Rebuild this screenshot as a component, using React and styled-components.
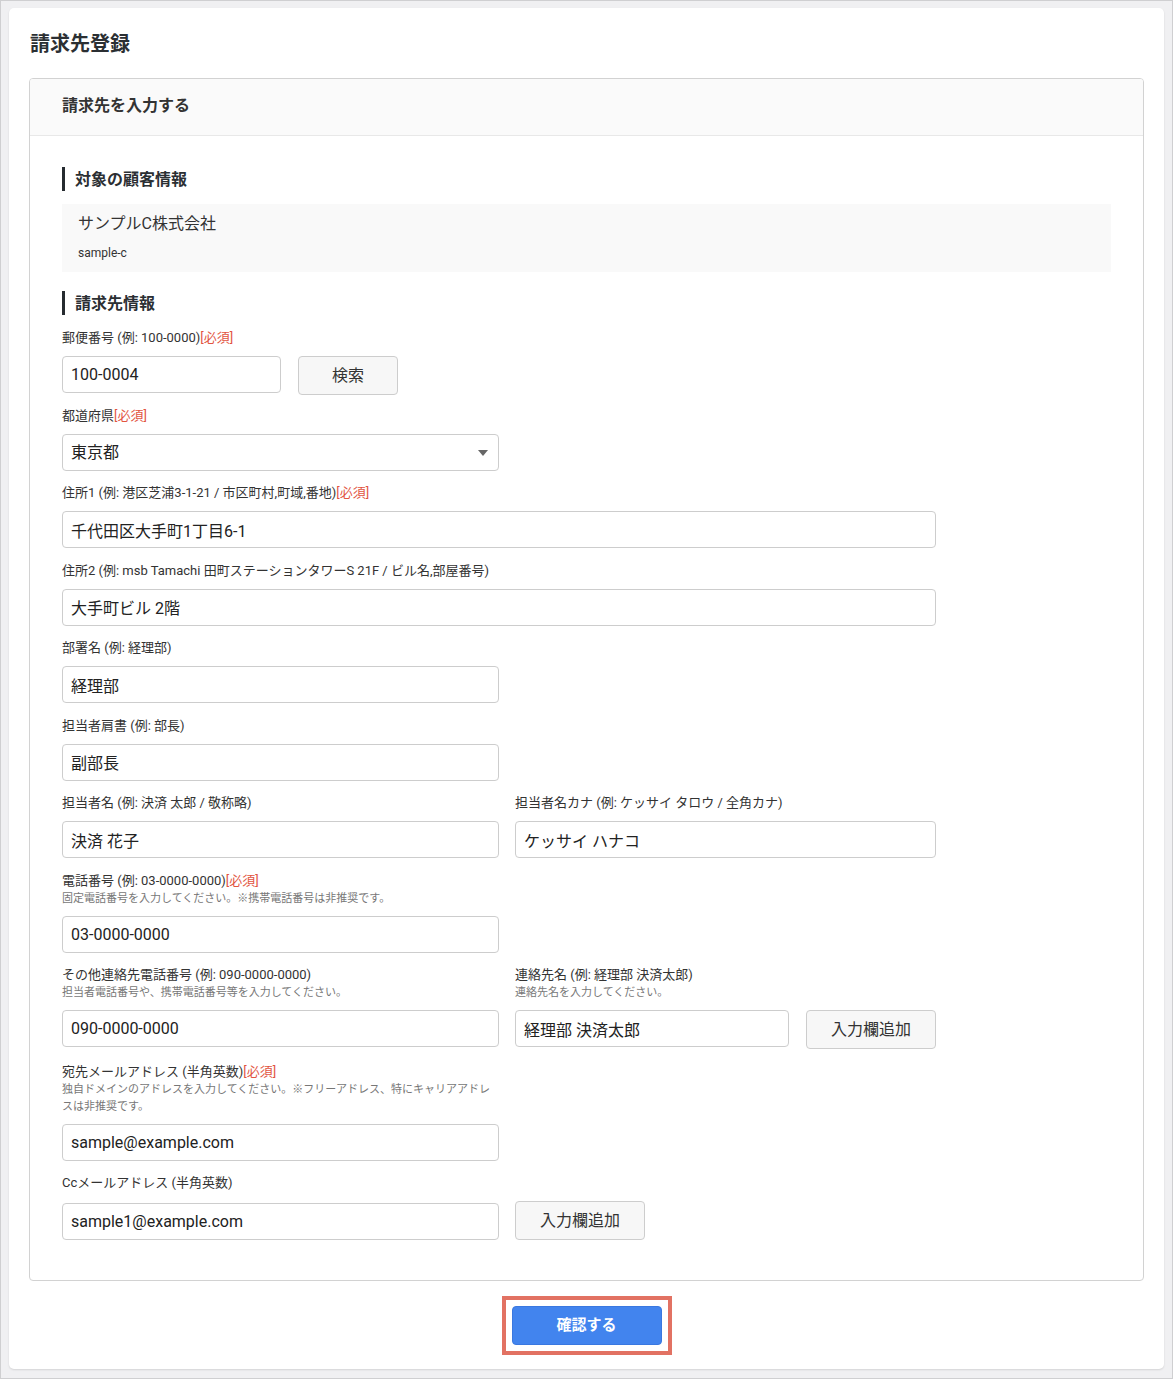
import React from 'react';
import styled, { createGlobalStyle } from 'styled-components';

const GlobalStyle = createGlobalStyle`
  html, body {
    margin: 0;
    padding: 0;
    background: #f0f0f2;
  }
  body {
    font-family: Roboto, "Noto Sans CJK JP", sans-serif;
    color: #333;
  }
  * {
    box-sizing: border-box;
  }
`;

function Field({ label, required, help, children }) {
    return (
        <FieldBox>
            <Label>
                {label}
                {required && <Required>[必須]</Required>}
            </Label>
            {help && <Help>{help}</Help>}
            {children}
        </FieldBox>
    );
}

function App() {
    return (
        <Frame>
            <GlobalStyle />
            <Card>
                <Title>請求先登録</Title>
                <Panel>
                    <PanelHeader>請求先を入力する</PanelHeader>
                    <PanelBody>
                        {/* 対象の顧客情報 */}
                        <SectionHeading>対象の顧客情報</SectionHeading>
                        <CustomerBox>
                            <CustomerName>サンプルC株式会社</CustomerName>
                            <CustomerId>sample-c</CustomerId>
                        </CustomerBox>

                        {/* 請求先情報 */}
                        <SectionHeading $spaced>請求先情報</SectionHeading>

                        <Field label="郵便番号 (例: 100-0000)" required>
                            <InputRow $height="37px">
                                <TextInput $width="219px" defaultValue="100-0004" />
                                <SubButton $width="100px">検索</SubButton>
                            </InputRow>
                        </Field>

                        <Field label="都道府県" required>
                            <SelectWrap>
                                <Select defaultValue="東京都">
                                    <option>東京都</option>
                                </Select>
                                <Caret width="10" height="6" viewBox="0 0 10 6">
                                    <path d="M0 0 H10 L5 6 Z" fill="#666" />
                                </Caret>
                            </SelectWrap>
                        </Field>

                        <Field label="住所1 (例: 港区芝浦3-1-21 / 市区町村,町域,番地)" required>
                            <TextInput $width="874px" defaultValue="千代田区大手町1丁目6-1" />
                        </Field>

                        <Field label="住所2 (例: msb Tamachi 田町ステーションタワーS 21F / ビル名,部屋番号)">
                            <TextInput $width="874px" defaultValue="大手町ビル 2階" />
                        </Field>

                        <Field label="部署名 (例: 経理部)">
                            <TextInput defaultValue="経理部" />
                        </Field>

                        <Field label="担当者肩書 (例: 部長)">
                            <TextInput defaultValue="副部長" />
                        </Field>

                        <TwoCol>
                            <Field label="担当者名 (例: 決済 太郎 / 敬称略)">
                                <TextInput defaultValue="決済 花子" />
                            </Field>
                            <Field label="担当者名カナ (例: ケッサイ タロウ / 全角カナ)">
                                <TextInput $width="421px" defaultValue="ケッサイ ハナコ" />
                            </Field>
                        </TwoCol>

                        <TwoCol>
                            <Field
                                label="電話番号 (例: 03-0000-0000)"
                                required
                                help="固定電話番号を入力してください。※携帯電話番号は非推奨です。"
                            >
                                <TextInput defaultValue="03-0000-0000" />
                            </Field>
                        </TwoCol>

                        <TwoCol>
                            <Field
                                label="その他連絡先電話番号 (例: 090-0000-0000)"
                                help="担当者電話番号や、携帯電話番号等を入力してください。"
                            >
                                <TextInput defaultValue="090-0000-0000" />
                            </Field>
                            <Field
                                label="連絡先名 (例: 経理部 決済太郎)"
                                help="連絡先名を入力してください。"
                            >
                                <InputRow>
                                    <TextInput $width="275px" defaultValue="経理部 決済太郎" />
                                    <SubButton $width="130px">入力欄追加</SubButton>
                                </InputRow>
                            </Field>
                        </TwoCol>

                        <TwoCol>
                            <Field
                                label="宛先メールアドレス (半角英数)"
                                required
                                help="独自ドメインのアドレスを入力してください。※フリーアドレス、特にキャリアアドレスは非推奨です。"
                            >
                                <TextInput defaultValue="sample@example.com" />
                            </Field>
                        </TwoCol>

                        <Field label="Ccメールアドレス (半角英数)">
                            <InputRow $gap="16px" $align="flex-end">
                                <TextInput defaultValue="sample1@example.com" />
                                <SubButton $width="130px">入力欄追加</SubButton>
                            </InputRow>
                        </Field>
                    </PanelBody>
                </Panel>

                <Footer>
                    <Highlight>
                        <PrimaryButton>確認する</PrimaryButton>
                    </Highlight>
                </Footer>
            </Card>
        </Frame>
    );
}

export default App;

// Styled Components
const Frame = styled.div`
  min-height: 1379px;
  border: 1px solid #cfcfd1;
  background: #f0f0f2;
  padding: 7px 8px 9px 8px;
`;

const Card = styled.div`
  background: #ffffff;
  border-radius: 5px;
  box-shadow: 0 1px 2px rgba(0, 0, 0, 0.12);
  padding: 21px 20px 14px 20px;
`;

const Title = styled.h1`
  margin: 0 0 19px 1px;
  font-size: 20px;
  line-height: 30px;
  font-weight: 700;
  color: #2b2f33;
`;

const Panel = styled.div`
  border: 1px solid #d2d2d2;
  border-radius: 4px;
  overflow: hidden;
`;

const PanelHeader = styled.div`
  height: 57px;
  display: flex;
  align-items: center;
  padding: 0 32px 6px 32px;
  background: #fafafa;
  border-bottom: 1px solid #e8e8e8;
  font-size: 16px;
  font-weight: 600;
  color: #333;
`;

const PanelBody = styled.div`
  padding: 31px 32px 40px 32px;
`;

const SectionHeading = styled.h2`
  margin: ${(p) => (p.$spaced ? '19px 0 14px' : '0 0 13px')};
  height: 24px;
  display: flex;
  align-items: center;
  padding: 0 0 2px 10px;
  border-left: 3px solid #262b30;
  font-size: 16px;
  font-weight: 700;
  color: #2b2f33;
`;

const CustomerBox = styled.div`
  background: #f9f9f9;
  padding: 8px 16px 10px 16px;
`;

const CustomerName = styled.div`
  font-size: 16px;
  line-height: 24px;
  color: #333;
`;

const CustomerId = styled.div`
  margin-top: 8px;
  font-size: 12px;
  line-height: 18px;
  color: #333;
`;

const FieldBox = styled.div`
  margin-bottom: 13.5px;
  &:last-child {
    margin-bottom: 0;
  }
`;

const Label = styled.div`
  font-size: 13px;
  line-height: 18px;
  color: #333;
  margin-bottom: 9px;
`;

const Required = styled.span`
  color: #e2543f;
`;

const Help = styled.div`
  width: 437px;
  margin-top: -9px;
  margin-bottom: 9px;
  font-size: 11px;
  line-height: 17px;
  color: #777;
`;

const TwoCol = styled.div`
  display: grid;
  grid-template-columns: 437px 421px;
  column-gap: 16px;
  margin-bottom: 13.5px;

  & > ${FieldBox} {
    margin-bottom: 0;
  }
`;

const InputRow = styled.div`
  display: flex;
  align-items: ${(p) => p.$align || 'flex-start'};
  gap: ${(p) => p.$gap || '17px'};
  height: ${(p) => p.$height || 'auto'};
`;

const TextInput = styled.input`
  display: block;
  width: ${(p) => p.$width || '437px'};
  height: 37px;
  padding: 0 8px;
  border: 1px solid #cdcdcd;
  border-radius: 4px;
  background: #fff;
  font-family: Roboto, "Noto Sans CJK JP", sans-serif;
  font-size: 16px;
  color: #222;
  outline: none;
`;

const SelectWrap = styled.div`
  position: relative;
  width: 437px;
`;

const Select = styled.select`
  display: block;
  width: 100%;
  height: 37px;
  padding: 0 8px;
  border: 1px solid #cdcdcd;
  border-radius: 4px;
  background: #fff;
  appearance: none;
  font-family: Roboto, "Noto Sans CJK JP", sans-serif;
  font-size: 16px;
  color: #222;
  outline: none;
`;

const Caret = styled.svg`
  position: absolute;
  right: 11px;
  top: 16px;
  pointer-events: none;
`;

const SubButton = styled.button`
  width: ${(p) => p.$width};
  height: 39px;
  flex-shrink: 0;
  padding: 0 0 4px 0;
  border: 1px solid #cdcdcd;
  border-radius: 4px;
  background: #f7f7f7;
  font-family: Roboto, "Noto Sans CJK JP", sans-serif;
  font-size: 16px;
  color: #333;
  cursor: pointer;

  &:hover {
    background: #efefef;
  }
`;

const Footer = styled.div`
  display: flex;
  justify-content: center;
  margin-top: 15px;
`;

const Highlight = styled.div`
  border: 4px solid #e27263;
  padding: 6px;
`;

const PrimaryButton = styled.button`
  display: block;
  width: 150px;
  height: 39px;
  padding: 0 0 4px 0;
  border: 1px solid #3a78e0;
  border-radius: 4px;
  background: #4284ee;
  font-family: Roboto, "Noto Sans CJK JP", sans-serif;
  font-size: 15px;
  font-weight: 700;
  color: #fff;
  cursor: pointer;
`;
